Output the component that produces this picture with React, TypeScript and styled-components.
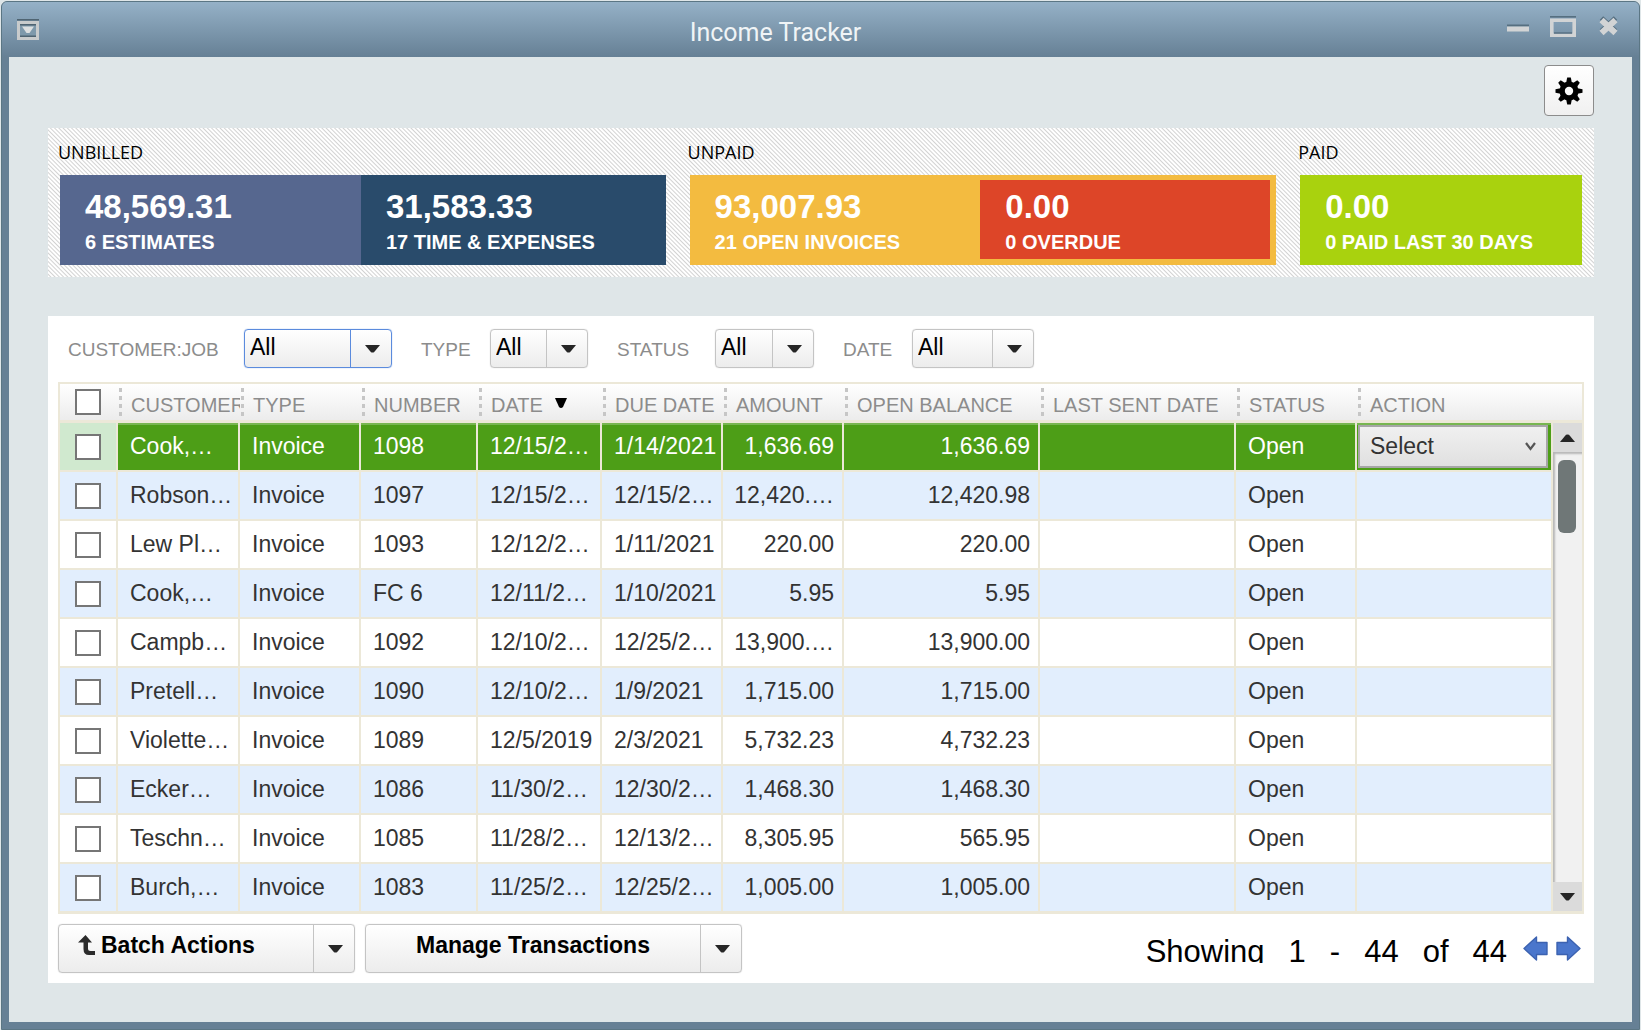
import React, { useState } from "react";
import styled, { createGlobalStyle, css } from "styled-components";

const sans = `"Liberation Sans", Arial, sans-serif`;
const humanist = `"Open Sans", "Noto Sans", sans-serif`;
const line = "#ece8d8";
const gloss = "linear-gradient(#ffffff, #ececec)";

const GlobalStyle = createGlobalStyle`
  *, *::before, *::after { box-sizing: border-box; }
  body { margin: 0; background: #dfe6e8; font-family: ${sans}; }
  button, select, input { font: inherit; margin: 0; }
`;

const Window = styled.main`
  min-height: 100vh;
  display: flex;
  flex-direction: column;
  padding: 1px;
`;

const Frame = styled.div`
  flex: 1;
  display: flex;
  flex-direction: column;
  border: 1px solid #5b7684;
  border-radius: 6px 6px 0 0;
  background: #668095;
  padding: 0 7px 7px;
`;

const TitleBar = styled.header`
  height: 55px;
  flex: none;
  margin: 0 -7px;
  padding: 0 18px 0 14px;
  display: flex;
  align-items: center;
  border-radius: 5px 5px 0 0;
  background: linear-gradient(#95b1c7, #668095);
`;

const Title = styled.h1`
  flex: 1;
  margin: 0;
  padding: 6px 0 0 4px;
  text-align: center;
  font: 400 25px/32px Roboto, sans-serif;
  color: #f0f4f6;
`;

const WindowControls = styled.div`
  display: flex;
  align-items: center;
  gap: 20px;
  padding-bottom: 6px;
`;

const GlyphButton = styled.button`
  display: flex;
  padding: 0;
  border: 0;
  background: none;
`;

const Content = styled.div`
  flex: 1;
  padding: 8px 38px 39px 39px;
  background: #dfe6e8;
  display: flex;
  flex-direction: column;
`;

const Toolbar = styled.div`
  display: flex;
  justify-content: flex-end;
  margin-bottom: 12px;
`;

const GearButton = styled.button`
  width: 50px;
  height: 51px;
  display: grid;
  place-items: center;
  padding: 0;
  border: 1px solid #8c8c8c;
  border-radius: 4px;
  background: linear-gradient(#ffffff, #f0f0f0);
`;

const Summary = styled.section`
  display: grid;
  grid-template-columns: 606fr 587fr 282fr;
  gap: 24px;
  padding: 12px 12px 12px 12px;
  margin-bottom: 39px;
  background: repeating-linear-gradient(45deg, #ffffff 0 1px, #d2d2d2 2px, #ffffff 3px);
`;

const GroupName = styled.h2`
  margin: 0 0 11px -2px;
  font: 400 18px/24px ${humanist};
  color: #000;
`;

const Tiles = styled.div<{ $inset?: boolean }>`
  display: flex;
  height: 90px;
  background: ${(p) => (p.$inset ? "#f3bb40" : "none")};
  padding: ${(p) => (p.$inset ? "0 6px 0 0" : "0")};
`;

const Tile = styled.article<{ $color: string; $grow: number; $inset?: boolean }>`
  flex: ${(p) => p.$grow} 1 0;
  min-width: 0;
  padding: ${(p) => (p.$inset ? "8px" : "13px")} 0 0 25px;
  margin: ${(p) => (p.$inset ? "5px 0 6px" : "0")};
  background: ${(p) => p.$color};
  color: #fff;
  font-weight: 700;
  white-space: nowrap;
`;

const Total = styled.p`
  margin: 0;
  font-size: 33px;
  line-height: 38px;
`;

const Caption = styled.p`
  margin: 4px 0 0;
  font-size: 20px;
  line-height: 24px;
`;

const Panel = styled.section`
  flex: 1;
  background: #fff;
  padding: 13px 10px 10px;
`;

const Filters = styled.form`
  display: flex;
  gap: 29px;
  padding-left: 10px;
  margin-bottom: 14px;
`;

const Filter = styled.label<{ $name: number; $box: number }>`
  display: grid;
  grid-template-columns: ${(p) => p.$name}px ${(p) => p.$box}px;
  align-items: center;
  font-size: 19px;
  color: #8c8c8c;
`;

const FilterName = styled.span`
  padding-top: 3px;
`;

const Combo = styled.span<{ $focused?: boolean }>`
  --edge: ${(p) => (p.$focused ? "#5b8bdd" : "#c4c4c4")};
  display: grid;
  grid-template-columns: 1fr 41px;
  align-items: center;
  height: 39px;
  border: 1px solid var(--edge);
  border-radius: 4px;
  background: ${gloss};
  box-shadow: 0 0 1px var(--edge);

  > * { grid-row: 1; }
  > select {
    grid-column: 1 / 3;
    width: 100%;
    height: 37px;
    padding: 0 40px 3px 5px;
    appearance: none;
    border: 0;
    outline: 0;
    background: none;
    font-size: 23px;
    color: #000;
  }
`;

const ComboArrow = styled.span`
  grid-column: 2;
  height: 100%;
  display: grid;
  place-items: center;
  padding-left: 3px;
  border-left: 1px solid var(--edge);
  pointer-events: none;
`;

const Grid = styled.div`
  display: flex;
  border: 2px solid ${line};
  border-bottom-width: 3px;
`;

const Table = styled.table`
  flex: 1;
  min-width: 0;
  table-layout: fixed;
  border-collapse: separate;
  border-spacing: 0;
  width: 0;
`;

const HeadCell = styled.th<{ $first?: boolean }>`
  height: 39px;
  padding: ${(p) => (p.$first ? "0" : "5px 0 0 13px")};
  border-bottom: 3px solid ${line};
  text-align: left;
  font-size: 20px;
  line-height: 22px;
  font-weight: 400;
  color: #8c8c8c;
  white-space: nowrap;
  overflow: hidden;
  background: ${gloss};
  ${(p) =>
    !p.$first &&
    css`
      background:
        repeating-linear-gradient(#c6c6c6 0 4px, transparent 4px 8px) 1px 4px / 3px 28px no-repeat,
        ${gloss};
    `}
`;

const Row = styled.tr<{ $selected?: boolean }>`
  color: ${(p) => (p.$selected ? "#fff" : "#333")};
  background: #fff;
  &:nth-child(even) { background: #e2eefd; }
  ${(p) =>
    p.$selected &&
    css`
      background: #4d9e17;
      td { box-shadow: inset 0 2px #78b650; }
      td:first-child { background: #d0e9cf; box-shadow: none; }
    `}
`;

const Cell = styled.td<{ $right?: boolean; $flush?: boolean }>`
  height: 49px;
  padding: ${(p) => (p.$flush ? "0" : p.$right ? "0 8px 1px 9px" : "0 0 1px 12px")};
  border: solid ${line};
  border-width: 0 2px 2px 0;
  text-align: ${(p) => (p.$right ? "right" : "left")};
  font-size: 23px;
  line-height: 26px;
  white-space: nowrap;
  overflow: hidden;
  tr:last-child > & { border-bottom: 0; height: 47px; }
`;

const Check = styled.input.attrs({ type: "checkbox" })`
  appearance: none;
  display: block;
  width: 26px;
  height: 26px;
  margin: 0 0 0 15px;
  border: 2px solid #767676;
  background: #fff;
  &:checked { background: #767676; box-shadow: inset 0 0 0 4px #fff; }
`;

const ActionBox = styled.span`
  display: grid;
  grid-template-columns: 1fr 32px;
  align-items: center;
  height: 43px;
  margin: 2px 3px 2px 1px;
  border: 2px solid #a6a6a6;
  background: linear-gradient(#f0f0f0, #e0e0e0);

  > * { grid-row: 1; }
  > svg { grid-column: 2; pointer-events: none; justify-self: center; }
  > select {
    grid-column: 1 / 3;
    height: 39px;
    padding: 0 32px 2px 10px;
    appearance: none;
    border: 0;
    outline: 0;
    background: none;
    font-size: 23px;
    color: #333;
  }
`;

const SortMark = styled.svg`
  margin-left: 12px;
  vertical-align: 4px;
`;

const ScrollColumn = styled.div`
  width: 29px;
  display: flex;
  flex-direction: column;
`;

const ScrollCap = styled.div`
  height: 39px;
  border-bottom: 3px solid ${line};
  background: ${gloss};
`;

const ScrollButton = styled.button`
  height: 29px;
  padding: 0;
  display: grid;
  place-items: center;
  border: 0;
  background: #dbdbdb;
`;

const ScrollTrack = styled.div`
  flex: 1;
  padding: 8px 6px 0 5px;
  background: #f1f1f1;
  box-shadow: inset 2px 2px 2px #b8b8b8;
`;

const ScrollThumb = styled.div`
  height: 73px;
  border-radius: 6px;
  background: #6f7777;
`;

const Footer = styled.footer`
  display: flex;
  align-items: center;
  gap: 10px;
  margin-top: 10px;
`;

const SplitButton = styled.div<{ $width: number }>`
  display: flex;
  width: ${(p) => p.$width}px;
  height: 49px;
  border: 1px solid #c4c4c4;
  border-radius: 4px;
  background: ${gloss};
  box-shadow: 0 0 1px #c4c4c4;
`;

const MainPart = styled.button<{ $start?: boolean }>`
  flex: 1;
  display: flex;
  align-items: center;
  justify-content: ${(p) => (p.$start ? "flex-start" : "center")};
  gap: 6px;
  padding: 0 0 7px ${(p) => (p.$start ? "19px" : "0")};
  border: 0;
  background: none;
  font-size: 23px;
  font-weight: 700;
  color: #000;
`;

const MorePart = styled.button`
  width: 41px;
  padding: 0 0 0 2px;
  display: grid;
  place-items: center;
  border: 0;
  border-left: 1px solid #c4c4c4;
  background: none;
`;

const Pager = styled.nav`
  flex: 1;
  display: flex;
  justify-content: flex-end;
  align-items: center;
  gap: 8px;
  padding-right: 3px;
`;

const Range = styled.p`
  margin: 4px 8px 0 0;
  display: flex;
  gap: 24px;
  height: 25px;
  font-size: 31px;
  line-height: 28px;
  color: #000;

  > span:first-child { overflow: hidden; }
`;

const Down = ({ up = false }: { up?: boolean }) => (
  <svg width="15" height="8" viewBox="0 0 15 8" aria-hidden="true">
    <path d={up ? "M0 8h15L9 .8Q7.500 0 6 .8z" : "M0 0h15L9 7.200Q7.500 8 6 7.200z"} fill="#262626" />
  </svg>
);

const Gear = () => (
  <svg width="28" height="28" viewBox="0 0 28 28" aria-hidden="true">
    {[0, 45, 90, 135].map((a) => (
      <path key={a} d="M12.200 .5h3.600l1 5v17l-1 5h-3.600l-1-5v-17z" transform={`rotate(${a} 14 14)`} />
    ))}
    <circle cx="14" cy="14" r="9.600" />
    <circle cx="14" cy="14" r="4.200" fill="#fafafa" />
  </svg>
);

const MenuGlyph = () => (
  <svg width="24" height="22" viewBox="0 0 24 22" aria-hidden="true">
    <path d="M1 .8h22" stroke="#4f6472" strokeWidth="1.600" />
    <path d="M2.500 3.500h19v16h-19z" fill="#7e99ab" stroke="#c8cbcc" strokeWidth="3" />
    <path d="M4 5.800h16M4 17.200h16" stroke="#4f6472" strokeWidth="1.600" />
    <path d="M6 7.500h12l-4.500 6.500h-3z" fill="#dcdfe0" />
  </svg>
);

const MinimizeGlyph = () => (
  <svg width="22" height="22" viewBox="0 0 22 22" aria-hidden="true">
    <path d="M0 9.500h22" stroke="#566f80" strokeWidth="2" />
    <path d="M0 13h22" stroke="#d2d4d5" strokeWidth="5" />
  </svg>
);

const MaximizeGlyph = () => (
  <svg width="28" height="22" viewBox="0 0 28 22" aria-hidden="true">
    <path d="M1 .8h26" stroke="#566f80" strokeWidth="1.600" />
    <path d="M2.800 4.300h22.400v15H2.800z" fill="none" stroke="#d2d4d5" strokeWidth="3.600" />
    <path d="M5 17h18" stroke="#566f80" strokeWidth="1.400" />
  </svg>
);

const CloseGlyph = () => (
  <svg width="24" height="24" viewBox="0 0 24 24" aria-hidden="true">
    <path d="M4.500 3l14 13M18.500 3L4.500 16" stroke="#566f80" strokeWidth="5" />
    <path d="M4.500 5l14 13M18.500 5L4.500 18" stroke="#d2d4d5" strokeWidth="6" />
  </svg>
);

const BatchGlyph = () => (
  <svg width="17" height="20" viewBox="0 0 17 20" aria-hidden="true">
    <path d="M0 7.500L7.500 0L14 7.500H10V13.500Q10 16 12.500 16H17V20H11Q5.500 20 5.500 14V7.500z" fill="#2b2b2b" />
  </svg>
);

const PageArrow = ({ flip = false }: { flip?: boolean }) => (
  <svg width="25" height="25" viewBox="0 0 25 25" aria-hidden="true">
    <path
      d="M1 12.500L13.500 1V6.500H24V18.500H13.500V24z"
      transform={flip ? "matrix(-1 0 0 1 25 0)" : undefined}
      fill="#4a76cc"
      stroke="#3c62b0"
      strokeWidth="1.400"
      strokeLinejoin="round"
    />
  </svg>
);

const groups = [
  {
    name: "UNBILLED",
    tiles: [
      { total: "48,569.31", caption: "6 ESTIMATES", color: "#56678f", grow: 301 },
      { total: "31,583.33", caption: "17 TIME & EXPENSES", color: "#294b6b", grow: 305 },
    ],
  },
  {
    name: "UNPAID",
    inset: true,
    tiles: [
      { total: "93,007.93", caption: "21 OPEN INVOICES", color: "#f3bb40", grow: 291 },
      { total: "0.00", caption: "0 OVERDUE", color: "#dd4528", grow: 290, inset: true },
    ],
  },
  {
    name: "PAID",
    tiles: [{ total: "0.00", caption: "0 PAID LAST 30 DAYS", color: "#a9d20e", grow: 1 }],
  },
];

const filters = [
  { name: "CUSTOMER:JOB", label: 176, box: 148, focused: true },
  { name: "TYPE", label: 69, box: 98 },
  { name: "STATUS", label: 98, box: 99 },
  { name: "DATE", label: 69, box: 122 },
];

const columns = [
  { name: "CUSTOMER", width: 122 },
  { name: "TYPE", width: 121 },
  { name: "NUMBER", width: 117 },
  { name: "DATE", width: 124, sorted: true },
  { name: "DUE DATE", width: 121 },
  { name: "AMOUNT", width: 121, right: true },
  { name: "OPEN BALANCE", width: 196, right: true },
  { name: "LAST SENT DATE", width: 196 },
  { name: "STATUS", width: 121 },
];

const rows = [
  ["Cook,…", "Invoice", "1098", "12/15/2…", "1/14/2021", "1,636.69", "1,636.69", "", "Open"],
  ["Robson…", "Invoice", "1097", "12/15/2…", "12/15/2…", "12,420.…", "12,420.98", "", "Open"],
  ["Lew Pl…", "Invoice", "1093", "12/12/2…", "1/11/2021", "220.00", "220.00", "", "Open"],
  ["Cook,…", "Invoice", "FC 6", "12/11/2…", "1/10/2021", "5.95", "5.95", "", "Open"],
  ["Campb…", "Invoice", "1092", "12/10/2…", "12/25/2…", "13,900.…", "13,900.00", "", "Open"],
  ["Pretell…", "Invoice", "1090", "12/10/2…", "1/9/2021", "1,715.00", "1,715.00", "", "Open"],
  ["Violette…", "Invoice", "1089", "12/5/2019", "2/3/2021", "5,732.23", "4,732.23", "", "Open"],
  ["Ecker…", "Invoice", "1086", "11/30/2…", "12/30/2…", "1,468.30", "1,468.30", "", "Open"],
  ["Teschn…", "Invoice", "1085", "11/28/2…", "12/13/2…", "8,305.95", "565.95", "", "Open"],
  ["Burch,…", "Invoice", "1083", "11/25/2…", "12/25/2…", "1,005.00", "1,005.00", "", "Open"],
];

export default function App() {
  const [checked, setChecked] = useState<boolean[]>(rows.map(() => false));
  const allChecked = checked.every(Boolean);

  return (
    <Window>
      <GlobalStyle />
      <Frame>
        <TitleBar>
          <GlyphButton aria-label="Window menu"><MenuGlyph /></GlyphButton>
          <Title>Income Tracker</Title>
          <WindowControls>
            <GlyphButton aria-label="Minimize"><MinimizeGlyph /></GlyphButton>
            <GlyphButton aria-label="Maximize"><MaximizeGlyph /></GlyphButton>
            <GlyphButton aria-label="Close"><CloseGlyph /></GlyphButton>
          </WindowControls>
        </TitleBar>
        <Content>
          <Toolbar>
            <GearButton aria-label="Settings"><Gear /></GearButton>
          </Toolbar>

          <Summary>
            {groups.map((g) => (
              <div key={g.name}>
                <GroupName>{g.name}</GroupName>
                <Tiles $inset={g.inset}>
                  {g.tiles.map((t) => (
                    <Tile key={t.caption} $color={t.color} $grow={t.grow} $inset={"inset" in t}>
                      <Total>{t.total}</Total>
                      <Caption>{t.caption}</Caption>
                    </Tile>
                  ))}
                </Tiles>
              </div>
            ))}
          </Summary>

          <Panel>
            <Filters>
              {filters.map((f) => (
                <Filter key={f.name} $name={f.label} $box={f.box}>
                  <FilterName>{f.name}</FilterName>
                  <Combo $focused={f.focused}>
                    <select defaultValue="All">
                      <option>All</option>
                    </select>
                    <ComboArrow><Down /></ComboArrow>
                  </Combo>
                </Filter>
              ))}
            </Filters>

            <Grid>
              <Table>
                <colgroup>
                  <col width={58} />
                  {columns.map((c) => <col key={c.name} width={c.width} />)}
                  <col />
                </colgroup>
                <thead>
                  <tr>
                    <HeadCell $first>
                      <Check
                        aria-label="Select all"
                        checked={allChecked}
                        onChange={() => setChecked(rows.map(() => !allChecked))}
                      />
                    </HeadCell>
                    {columns.map((c) => (
                      <HeadCell key={c.name}>
                        {c.name}
                        {c.sorted && (
                          <SortMark width="12" height="10" viewBox="0 0 12 10" aria-hidden="true">
                            <path d="M0 0h12L8 9q-2 2-4 0z" />
                          </SortMark>
                        )}
                      </HeadCell>
                    ))}
                    <HeadCell>ACTION</HeadCell>
                  </tr>
                </thead>
                <tbody>
                  {rows.map((r, i) => (
                    <Row key={r[2]} $selected={i === 0}>
                      <Cell $flush>
                        <Check
                          aria-label={`Select ${r[2]}`}
                          checked={checked[i]}
                          onChange={() => setChecked(checked.map((v, j) => (j === i ? !v : v)))}
                        />
                      </Cell>
                      {r.map((value, j) => (
                        <Cell key={columns[j].name} $right={columns[j].right}>{value}</Cell>
                      ))}
                      <Cell $flush>
                        {i === 0 && (
                          <ActionBox>
                            <select aria-label="Action" defaultValue="Select">
                              <option>Select</option>
                            </select>
                            <svg width="11" height="9" viewBox="0 0 11 9" aria-hidden="true">
                              <path d="M1 1l4.500 6L10 1" fill="none" stroke="#555" strokeWidth="2.200" />
                            </svg>
                          </ActionBox>
                        )}
                      </Cell>
                    </Row>
                  ))}
                </tbody>
              </Table>
              <ScrollColumn>
                <ScrollCap />
                <ScrollButton aria-label="Scroll up"><Down up /></ScrollButton>
                <ScrollTrack><ScrollThumb /></ScrollTrack>
                <ScrollButton aria-label="Scroll down"><Down /></ScrollButton>
              </ScrollColumn>
            </Grid>

            <Footer>
              <SplitButton $width={297}>
                <MainPart $start><BatchGlyph />Batch Actions</MainPart>
                <MorePart aria-label="More batch actions"><Down /></MorePart>
              </SplitButton>
              <SplitButton $width={377}>
                <MainPart>Manage Transactions</MainPart>
                <MorePart aria-label="More transaction actions"><Down /></MorePart>
              </SplitButton>
              <Pager aria-label="Pages">
                <Range>
                  <span>Showing</span>
                  <span>1</span>
                  <span>-</span>
                  <span>44</span>
                  <span>of</span>
                  <span>44</span>
                </Range>
                <GlyphButton aria-label="Previous page"><PageArrow /></GlyphButton>
                <GlyphButton aria-label="Next page"><PageArrow flip /></GlyphButton>
              </Pager>
            </Footer>
          </Panel>
        </Content>
      </Frame>
    </Window>
  );
}
